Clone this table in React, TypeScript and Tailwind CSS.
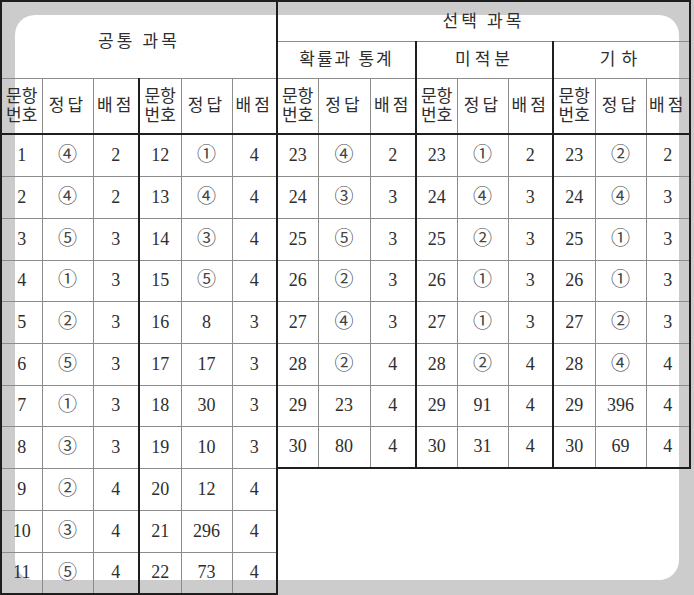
const common: [string, string, string][] = [
  ["1", "④", "2"],
  ["2", "④", "2"],
  ["3", "⑤", "3"],
  ["4", "①", "3"],
  ["5", "②", "3"],
  ["6", "⑤", "3"],
  ["7", "①", "3"],
  ["8", "③", "3"],
  ["9", "②", "4"],
  ["10", "③", "4"],
  ["11", "⑤", "4"],
  ["12", "①", "4"],
  ["13", "④", "4"],
  ["14", "③", "4"],
  ["15", "⑤", "4"],
  ["16", "8", "3"],
  ["17", "17", "3"],
  ["18", "30", "3"],
  ["19", "10", "3"],
  ["20", "12", "4"],
  ["21", "296", "4"],
  ["22", "73", "4"],
];

const electives: { name: string; track: string; rows: [string, string][] }[] = [
  {
    name: "확률과 통계",
    track: "tracking-[2px]",
    rows: [["④", "2"], ["③", "3"], ["⑤", "3"], ["②", "3"], ["④", "3"], ["②", "4"], ["23", "4"], ["80", "4"]],
  },
  {
    name: "미적분",
    track: "tracking-[4px]",
    rows: [["①", "2"], ["④", "3"], ["②", "3"], ["①", "3"], ["①", "3"], ["②", "4"], ["91", "4"], ["31", "4"]],
  },
  {
    name: "기하",
    track: "tracking-[6px]",
    rows: [["②", "2"], ["④", "3"], ["①", "3"], ["①", "3"], ["②", "3"], ["④", "4"], ["396", "4"], ["69", "4"]],
  },
];

const colWidths = [
  "w-[41px]", "w-[51px]", "w-[46px]",
  "w-[42px]", "w-[51px]", "w-[45px]",
  "w-[41px]", "w-[52px]", "w-[46px]",
  "w-[41px]", "w-[51px]", "w-[45px]",
  "w-[42px]", "w-[51px]", "w-[44px]",
];

const rowHeights = [
  "h-[42px]", "h-[42px]", "h-[42px]", "h-[41px]", "h-[42px]", "h-[42px]",
  "h-[41px]", "h-[42px]", "h-[42px]", "h-[42px]", "h-[42px]",
];

const isCircled = (v: string) => /[①-⑳]/.test(v);

function Value({ v }: { v: string }) {
  if (isCircled(v)) {
    return <span className="text-[19px] text-[#444]">{v}</span>;
  }
  return <span>{v}</span>;
}

function cellClass(col: number, row: number) {
  let c = "border border-[#8c8c8c] p-0 text-center align-middle";
  if (col % 3 === 0) c += " border-l-2 border-l-[#1e1e1e]";
  if (col === 5 || col === 14) c += " border-r-2 border-r-[#1e1e1e]";
  if ((row === 7 && col >= 6) || (row === 10 && col < 6)) c += " border-b-2 border-b-[#1e1e1e]";
  return c;
}

function HeadCell({ col }: { col: number }) {
  const base =
    "border border-[#8c8c8c] border-b-2 border-b-[#1e1e1e] p-0 text-center align-middle text-[17px]";
  const left = col % 3 === 0 ? " border-l-2 border-l-[#1e1e1e]" : "";
  const right = col === 5 || col === 14 ? " border-r-2 border-r-[#1e1e1e]" : "";
  const kind = col % 3;
  return (
    <th className={base + left + right + " font-normal"}>
      {kind === 0 && (
        <div className="flex flex-col items-center leading-[19px]">
          <span>문항</span>
          <span>번호</span>
        </div>
      )}
      {kind === 1 && <span className="tracking-[3px]">정답</span>}
      {kind === 2 && <span className="tracking-[3px]">배점</span>}
    </th>
  );
}

export default function App() {
  const rows = Array.from({ length: 11 }, (_, r) => r);

  return (
    <div className="grid w-[694px] h-[595px] bg-[#cccccc] font-['Liberation_Serif','Noto_Sans_CJK_KR',serif] text-[#2e2e2e]">
      <div className="col-start-1 row-start-1 m-[15px] rounded-[20px] bg-white" />
      <div className="col-start-1 row-start-1">
        <table className="table-fixed border-collapse w-[691px]">
          <colgroup>
            {colWidths.map((w, i) => (
              <col key={i} className={w} />
            ))}
          </colgroup>
          <thead>
            <tr className="h-[40px]">
              <th
                rowSpan={2}
                colSpan={6}
                className="border border-[#8c8c8c] border-t-2 border-t-[#1e1e1e] border-l-2 border-l-[#1e1e1e] border-r-2 border-r-[#1e1e1e] p-0 pt-[4px] text-center align-middle text-[17px] font-normal tracking-[3px]"
              >
                공통 과목
              </th>
              <th
                colSpan={9}
                className="border border-[#8c8c8c] border-t-2 border-t-[#1e1e1e] border-r-2 border-r-[#1e1e1e] p-0 text-center align-middle text-[17px] font-normal tracking-[3px]"
              >
                선택 과목
              </th>
            </tr>
            <tr className="h-[37px]">
              {electives.map((e, i) => (
                <th
                  key={e.name}
                  colSpan={3}
                  className={
                    "border border-[#8c8c8c] border-l-2 border-l-[#1e1e1e] p-0 text-center align-middle text-[17px] font-normal " +
                    e.track +
                    (i === 2 ? " border-r-2 border-r-[#1e1e1e]" : "")
                  }
                >
                  {e.name}
                </th>
              ))}
            </tr>
            <tr className="h-[56px]">
              {colWidths.map((_, i) => (
                <HeadCell key={i} col={i} />
              ))}
            </tr>
          </thead>
          <tbody className="text-[18px]">
            {rows.map((r) => {
              const left = common[r];
              const right = common[r + 11];
              const cells: string[] = [...left, ...right];
              if (r < 8) {
                electives.forEach((e) => {
                  cells.push(String(23 + r), e.rows[r][0], e.rows[r][1]);
                });
              }
              return (
                <tr key={r} className={rowHeights[r]}>
                  {cells.map((v, c) => (
                    <td key={c} className={cellClass(c, r)}>
                      <Value v={v} />
                    </td>
                  ))}
                  {r === 8 && <td rowSpan={3} colSpan={9} className="p-0" />}
                </tr>
              );
            })}
          </tbody>
        </table>
      </div>
    </div>
  );
}
